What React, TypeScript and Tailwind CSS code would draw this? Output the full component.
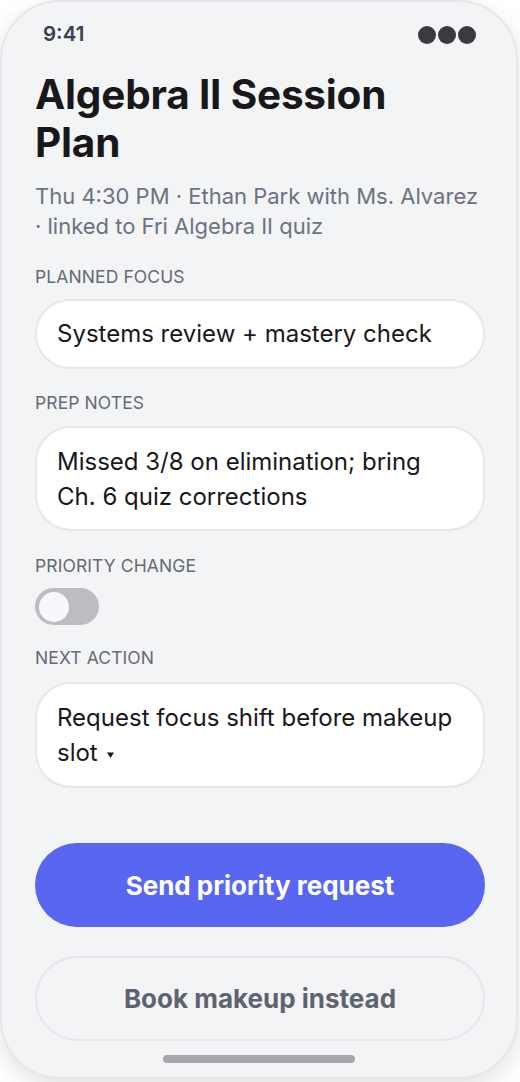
import React from "react";

function Label({ children }: { children: React.ReactNode }) {
  return (
    <div className="text-[17.5px] leading-[22px] tracking-[0.1px] uppercase text-[#656a74]">
      {children}
    </div>
  );
}

export default function App() {
  return (
    <div className="w-[520px] h-[1082px] bg-white font-['Inter',sans-serif]">
      <div className="relative w-[518px] h-[1079px] rounded-[60px] border-2 border-[#e5e7eb] bg-[#f3f4f6] shadow-[0_8px_24px_rgba(0,0,0,0.12)] overflow-hidden flex flex-col">
        {/* status bar */}
        <div className="flex items-center justify-between pl-[41px] pr-[40px] pt-[19px] h-[46px]">
          <span className="text-[20.5px] font-semibold text-[#374151]">9:41</span>
          <div className="flex gap-[2px]">
            <span className="w-[18px] h-[18px] rounded-full bg-[#3a3b3f]" />
            <span className="w-[18px] h-[18px] rounded-full bg-[#3a3b3f]" />
            <span className="w-[18px] h-[18px] rounded-full bg-[#3a3b3f]" />
          </div>
        </div>

        <div className="flex flex-col pl-[33px] pr-[31px] pt-[23px]">
          <h1 className="max-w-[420px] text-[40.5px] leading-[48px] font-bold text-[#18181b] tracking-[-0.2px]">
            Algebra II Session Plan
          </h1>
          <p className="mt-[14px] text-[22px] leading-[30px] text-[#6b7280]">
            Thu 4:30 PM · Ethan Park with Ms. Alvarez · linked to Fri Algebra II quiz
          </p>

          <div className="mt-[25px]">
            <Label>Planned focus</Label>
            <div className="mt-[11px] h-[70px] rounded-[36px] border-2 border-[#e5e7eb] bg-white flex items-center px-[20px] text-[24px] text-[#18181b]">
              Systems review + mastery check
            </div>
          </div>

          <div className="mt-[23px]">
            <Label>Prep notes</Label>
            <div className="mt-[12px] h-[105px] rounded-[36px] border-2 border-[#e5e7eb] bg-white px-[20px] flex items-center text-[24px] leading-[35px] text-[#18181b]">
              <span>Missed 3/8 on elimination; bring Ch. 6 quiz corrections</span>
            </div>
          </div>

          <div className="mt-[24px]">
            <Label>Priority change</Label>
            <div className="mt-[11px] w-[64px] h-[37px] rounded-full bg-[#bcbdc2] p-[4px] flex items-center">
              <span className="w-[30px] h-[30px] rounded-full bg-[#f7f8fa]" />
            </div>
          </div>

          <div className="mt-[22px]">
            <Label>Next action</Label>
            <div className="mt-[13px] h-[106px] rounded-[36px] border-2 border-[#e5e7eb] bg-white px-[20px] flex items-center text-[24px] leading-[35px] text-[#18181b]">
              <span>
                Request focus shift before makeup slot
                <svg className="inline-block ml-[9px] align-[3px]" width="7" height="6" viewBox="0 0 7 6">
                  <path d="M0 0.5 L7 0.5 L3.5 6 Z" fill="#18181b" />
                </svg>
              </span>
            </div>
          </div>

          <button className="mt-[55px] h-[84px] rounded-full bg-[#5866f1] text-white text-[26px] font-bold">
            Send priority request
          </button>
          <button className="mt-[29px] h-[85px] rounded-full border-2 border-[#e5e7eb] bg-[#f3f4f6] text-[#5f6370] text-[26px] font-bold">
            Book makeup instead
          </button>
        </div>

        <div className="absolute bottom-[14px] left-1/2 -translate-x-1/2 w-[192px] h-[8px] rounded-full bg-[#a6a7ab]" />
      </div>
    </div>
  );
}
